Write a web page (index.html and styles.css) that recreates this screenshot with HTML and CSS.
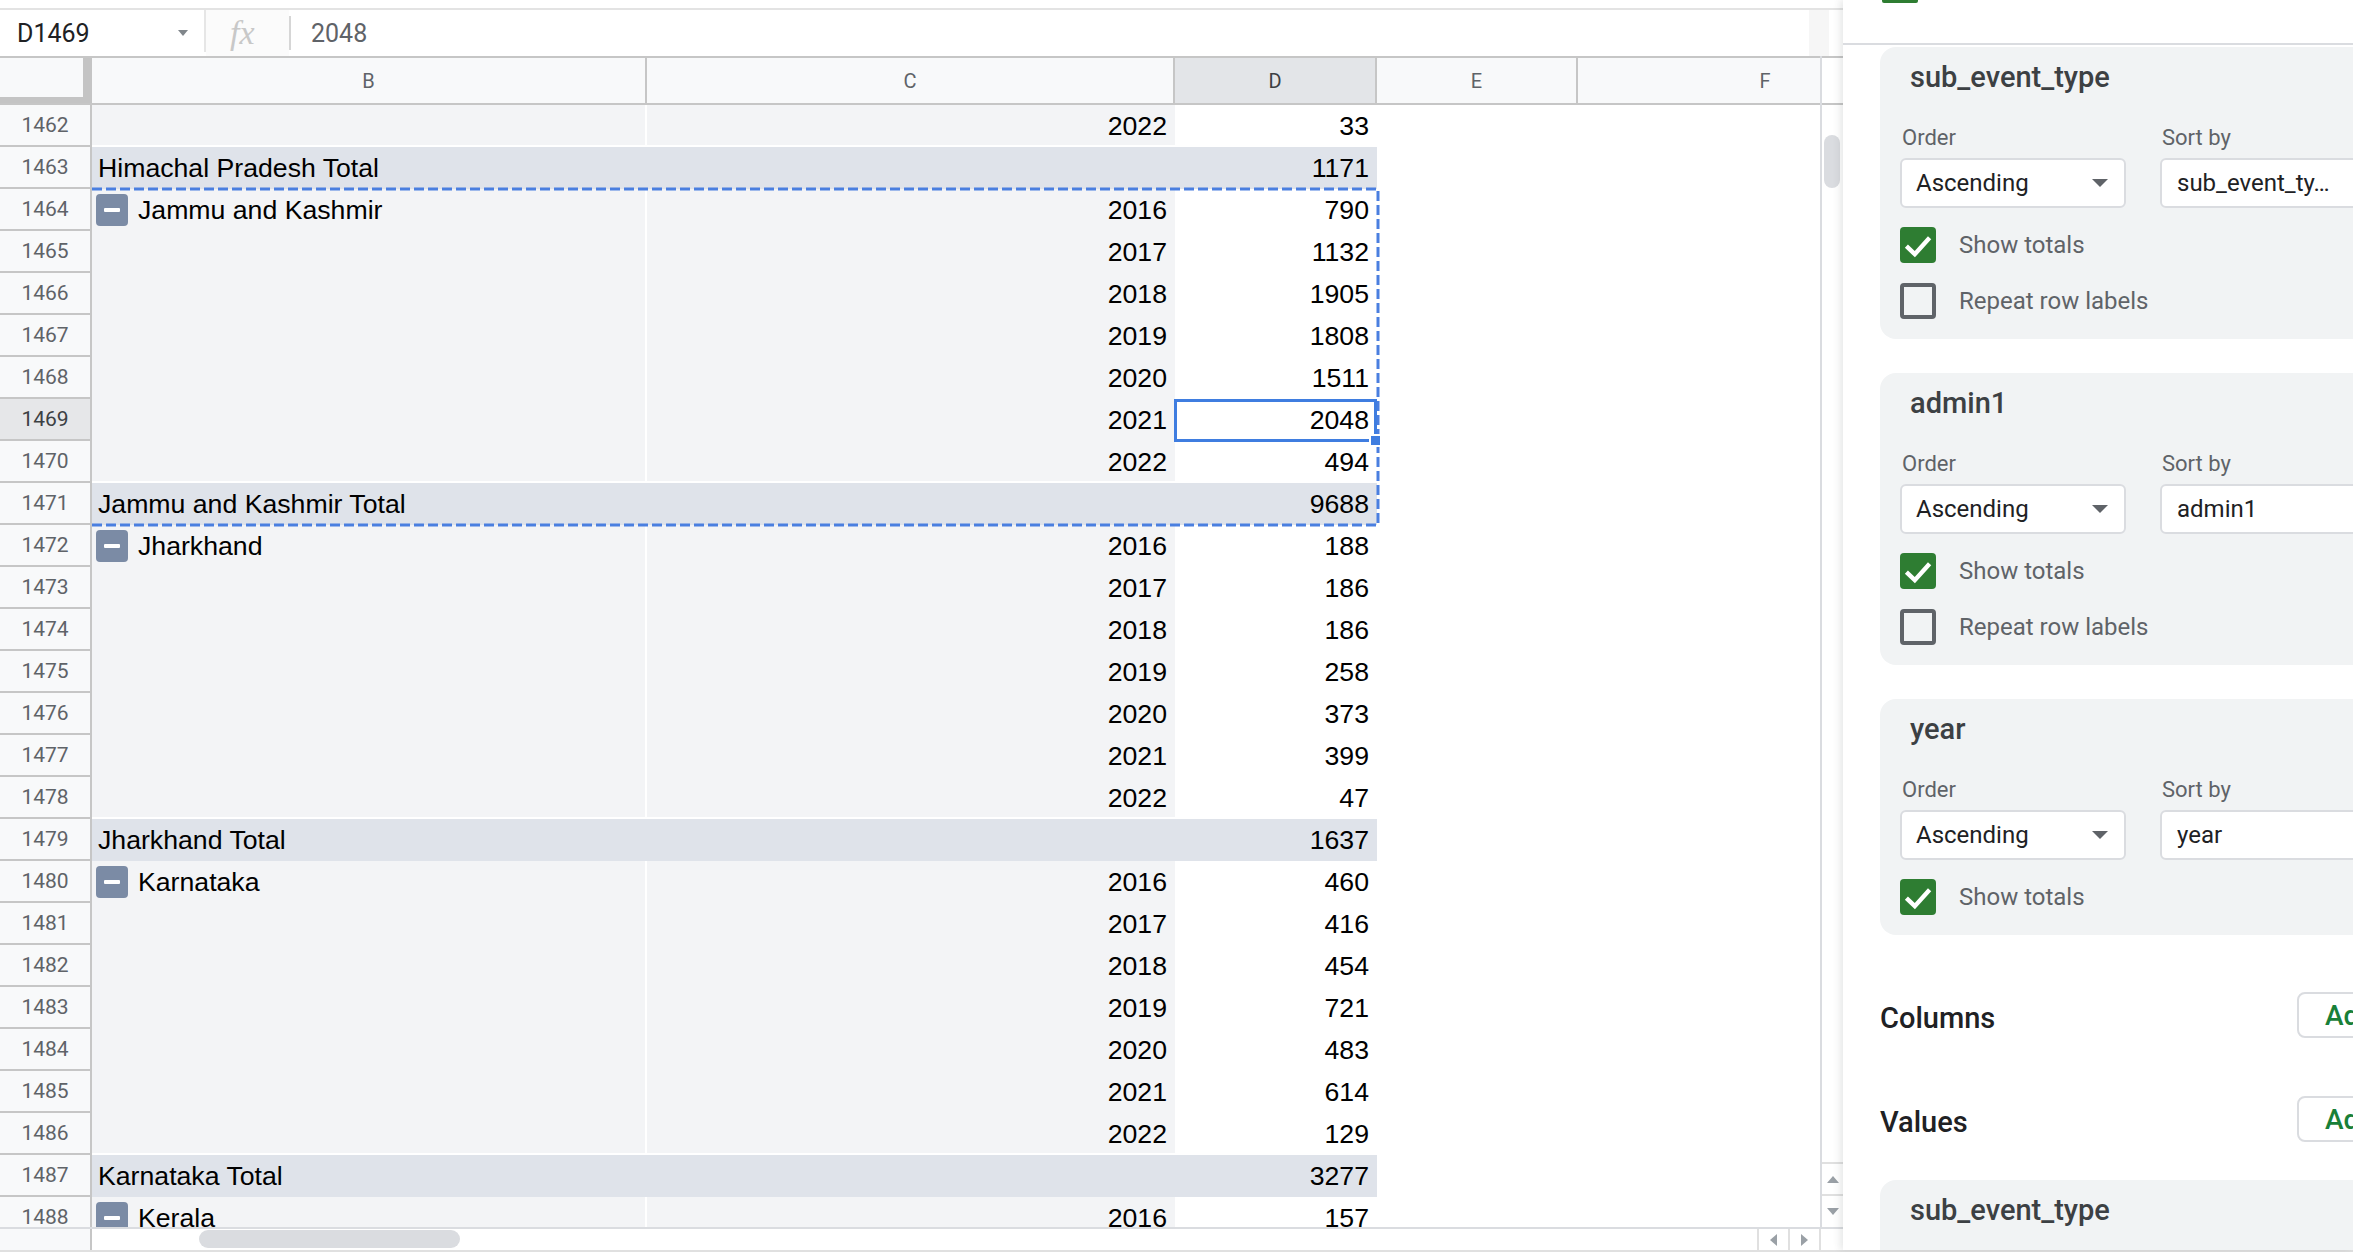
FILE: index.html
```html
<!DOCTYPE html>
<html>
<head>
<meta charset="utf-8">
<link rel="stylesheet" href="styles.css">
</head>
<body>
<div class="app">
  <div class="sheet">
    <div class="topstrip"></div>
    <div class="fbar">
      <div class="namebox"><span class="ref">D1469</span><svg class="nb-arrow" width="10" height="6" viewBox="0 0 10 6"><path d="M0 0 H10 L5 6 Z" fill="#80868b"/></svg></div>
      <div class="sep1"></div>
      <div class="fx">fx</div>
      <div class="sep2"></div>
      <div class="fval">2048</div>
      <div class="fbar-end"></div>
    </div>
    <div class="gridwrap">
      <div class="grid">
        <div class="hrow">
          <div class="corner"></div>
          <div class="ch">B</div>
          <div class="ch">C</div>
          <div class="ch sel">D</div>
          <div class="ch">E</div>
          <div class="ch">F</div>
        </div>

        <div class="row data last"><div class="rh">1462</div><div class="cell b"></div><div class="cell c num">2022</div><div class="cell d num">33</div><div class="cell e"></div><div class="cell f"></div></div>
        <div class="row total"><div class="rh">1463</div><div class="cell b">Himachal Pradesh Total</div><div class="cell c"></div><div class="cell d num">1171</div><div class="cell e"></div><div class="cell f"></div></div>

        <div class="row data grp"><div class="rh">1464</div><div class="cell b"><span class="tog"></span>Jammu and Kashmir</div><div class="cell c num">2016</div><div class="cell d num">790</div><div class="cell e"></div><div class="cell f"></div></div>
        <div class="row data"><div class="rh">1465</div><div class="cell b"></div><div class="cell c num">2017</div><div class="cell d num">1132</div><div class="cell e"></div><div class="cell f"></div></div>
        <div class="row data"><div class="rh">1466</div><div class="cell b"></div><div class="cell c num">2018</div><div class="cell d num">1905</div><div class="cell e"></div><div class="cell f"></div></div>
        <div class="row data"><div class="rh">1467</div><div class="cell b"></div><div class="cell c num">2019</div><div class="cell d num">1808</div><div class="cell e"></div><div class="cell f"></div></div>
        <div class="row data"><div class="rh">1468</div><div class="cell b"></div><div class="cell c num">2020</div><div class="cell d num">1511</div><div class="cell e"></div><div class="cell f"></div></div>
        <div class="row data"><div class="rh sel">1469</div><div class="cell b"></div><div class="cell c num">2021</div><div class="cell d num">2048</div><div class="cell e"></div><div class="cell f"></div></div>
        <div class="row data last"><div class="rh">1470</div><div class="cell b"></div><div class="cell c num">2022</div><div class="cell d num">494</div><div class="cell e"></div><div class="cell f"></div></div>
        <div class="row total"><div class="rh">1471</div><div class="cell b">Jammu and Kashmir Total</div><div class="cell c"></div><div class="cell d num">9688</div><div class="cell e"></div><div class="cell f"></div></div>

        <div class="row data grp"><div class="rh">1472</div><div class="cell b"><span class="tog"></span>Jharkhand</div><div class="cell c num">2016</div><div class="cell d num">188</div><div class="cell e"></div><div class="cell f"></div></div>
        <div class="row data"><div class="rh">1473</div><div class="cell b"></div><div class="cell c num">2017</div><div class="cell d num">186</div><div class="cell e"></div><div class="cell f"></div></div>
        <div class="row data"><div class="rh">1474</div><div class="cell b"></div><div class="cell c num">2018</div><div class="cell d num">186</div><div class="cell e"></div><div class="cell f"></div></div>
        <div class="row data"><div class="rh">1475</div><div class="cell b"></div><div class="cell c num">2019</div><div class="cell d num">258</div><div class="cell e"></div><div class="cell f"></div></div>
        <div class="row data"><div class="rh">1476</div><div class="cell b"></div><div class="cell c num">2020</div><div class="cell d num">373</div><div class="cell e"></div><div class="cell f"></div></div>
        <div class="row data"><div class="rh">1477</div><div class="cell b"></div><div class="cell c num">2021</div><div class="cell d num">399</div><div class="cell e"></div><div class="cell f"></div></div>
        <div class="row data last"><div class="rh">1478</div><div class="cell b"></div><div class="cell c num">2022</div><div class="cell d num">47</div><div class="cell e"></div><div class="cell f"></div></div>
        <div class="row total"><div class="rh">1479</div><div class="cell b">Jharkhand Total</div><div class="cell c"></div><div class="cell d num">1637</div><div class="cell e"></div><div class="cell f"></div></div>

        <div class="row data grp"><div class="rh">1480</div><div class="cell b"><span class="tog"></span>Karnataka</div><div class="cell c num">2016</div><div class="cell d num">460</div><div class="cell e"></div><div class="cell f"></div></div>
        <div class="row data"><div class="rh">1481</div><div class="cell b"></div><div class="cell c num">2017</div><div class="cell d num">416</div><div class="cell e"></div><div class="cell f"></div></div>
        <div class="row data"><div class="rh">1482</div><div class="cell b"></div><div class="cell c num">2018</div><div class="cell d num">454</div><div class="cell e"></div><div class="cell f"></div></div>
        <div class="row data"><div class="rh">1483</div><div class="cell b"></div><div class="cell c num">2019</div><div class="cell d num">721</div><div class="cell e"></div><div class="cell f"></div></div>
        <div class="row data"><div class="rh">1484</div><div class="cell b"></div><div class="cell c num">2020</div><div class="cell d num">483</div><div class="cell e"></div><div class="cell f"></div></div>
        <div class="row data"><div class="rh">1485</div><div class="cell b"></div><div class="cell c num">2021</div><div class="cell d num">614</div><div class="cell e"></div><div class="cell f"></div></div>
        <div class="row data last"><div class="rh">1486</div><div class="cell b"></div><div class="cell c num">2022</div><div class="cell d num">129</div><div class="cell e"></div><div class="cell f"></div></div>
        <div class="row total"><div class="rh">1487</div><div class="cell b">Karnataka Total</div><div class="cell c"></div><div class="cell d num">3277</div><div class="cell e"></div><div class="cell f"></div></div>

        <div class="row data grp"><div class="rh">1488</div><div class="cell b"><span class="tog"></span>Kerala</div><div class="cell c num">2016</div><div class="cell d num">157</div><div class="cell e"></div><div class="cell f"></div></div>

        <svg class="marquee" width="1820" height="1171" viewBox="0 0 1820 1171"><path d="M92 133 H1378 V469 H92" fill="none" stroke="#4a7fe0" stroke-width="3" stroke-dasharray="10 4"/></svg>
        <div class="active"></div>
        <div class="handle"></div>
      </div>
      <div class="vscroll">
        <div class="vs-head"></div>
        <div class="vs-track"><div class="vs-thumb"></div></div>
        <div class="vs-btn"><svg width="12" height="7" viewBox="0 0 12 7"><path d="M0 7 L6 0 L12 7 Z" fill="#9aa0a6"/></svg></div>
        <div class="vs-btn vs-btn2"><svg width="12" height="7" viewBox="0 0 12 7"><path d="M0 0 L6 7 L12 0 Z" fill="#9aa0a6"/></svg></div>
      </div>
    </div>
    <div class="hscroll">
      <div class="hs-left"></div>
      <div class="hs-track"><div class="hs-thumb"></div></div>
      <div class="hs-btn"><svg width="7" height="12" viewBox="0 0 7 12"><path d="M7 0 L0 6 L7 12 Z" fill="#9aa0a6"/></svg></div>
      <div class="hs-btn"><svg width="7" height="12" viewBox="0 0 7 12"><path d="M0 0 L7 6 L0 12 Z" fill="#9aa0a6"/></svg></div>
      <div class="hs-corner"></div>
    </div>
  </div>

  <div class="panel">
    <div class="ptop"><div class="stub"></div></div>
    <div class="pbody">
      <div class="card">
        <div class="ctitle">sub_event_type</div>
        <div class="labels"><span>Order</span><span>Sort by</span></div>
        <div class="selects">
          <div class="selbox">Ascending<svg class="tri" width="16" height="8" viewBox="0 0 16 8"><path d="M0 0 H16 L8 8 Z" fill="#5f6368"/></svg></div>
          <div class="selbox">sub_event_ty…</div>
        </div>
        <div class="cbrow"><span class="cb on"><svg width="36" height="36" viewBox="0 0 18 18"><path d="M3.2 9.6 L7.4 13.6 L14.8 5.4" fill="none" stroke="#fff" stroke-width="2.2"/></svg></span>Show totals</div>
        <div class="cbrow"><span class="cb off"></span>Repeat row labels</div>
      </div>

      <div class="card">
        <div class="ctitle">admin1</div>
        <div class="labels"><span>Order</span><span>Sort by</span></div>
        <div class="selects">
          <div class="selbox">Ascending<svg class="tri" width="16" height="8" viewBox="0 0 16 8"><path d="M0 0 H16 L8 8 Z" fill="#5f6368"/></svg></div>
          <div class="selbox">admin1</div>
        </div>
        <div class="cbrow"><span class="cb on"><svg width="36" height="36" viewBox="0 0 18 18"><path d="M3.2 9.6 L7.4 13.6 L14.8 5.4" fill="none" stroke="#fff" stroke-width="2.2"/></svg></span>Show totals</div>
        <div class="cbrow"><span class="cb off"></span>Repeat row labels</div>
      </div>

      <div class="card">
        <div class="ctitle">year</div>
        <div class="labels"><span>Order</span><span>Sort by</span></div>
        <div class="selects">
          <div class="selbox">Ascending<svg class="tri" width="16" height="8" viewBox="0 0 16 8"><path d="M0 0 H16 L8 8 Z" fill="#5f6368"/></svg></div>
          <div class="selbox">year</div>
        </div>
        <div class="cbrow"><span class="cb on"><svg width="36" height="36" viewBox="0 0 18 18"><path d="M3.2 9.6 L7.4 13.6 L14.8 5.4" fill="none" stroke="#fff" stroke-width="2.2"/></svg></span>Show totals</div>
      </div>

      <div class="sect sect1"><span class="sect-label">Columns</span><span class="addbtn">Add</span></div>
      <div class="sect sect2"><span class="sect-label">Values</span><span class="addbtn">Add</span></div>

      <div class="card card4">
        <div class="ctitle">sub_event_type</div>
      </div>
    </div>
  </div>
</div>
<div class="bottomline"></div>
</body>
</html>
```

FILE: styles.css
```css
* { box-sizing: border-box; margin: 0; padding: 0; }
html, body { width: 2353px; height: 1252px; overflow: hidden; background: #fff; }
body { font-family: Roboto, "Liberation Sans", Arial, sans-serif; }

.app { display: flex; height: 1250px; }
.sheet { width: 1843px; flex: none; display: flex; flex-direction: column; }

.topstrip { height: 10px; border-bottom: 2px solid #e3e3e3; }

.fbar { height: 46px; display: flex; align-items: center; }
.namebox { width: 204px; height: 100%; display: flex; align-items: center; padding-left: 17px; padding-right: 16px; }
.ref { font-size: 25px; color: #202124; }
.nb-arrow { margin-left: auto; }
.sep1 { width: 2px; height: 42px; align-self: flex-start; background: #e6e6e6; }
.fx { width: 83px; height: 100%; display: flex; align-items: center; padding-left: 24px; font-family: "Liberation Serif", serif; font-style: italic; font-size: 34px; color: #c8c8c8; background: #fbfbfb; }
.sep2 { width: 2px; height: 34px; background: #d6d6d6; }
.fval { padding-left: 20px; font-size: 25px; color: #5f6368; }
.fbar-end { margin-left: auto; margin-right: 14px; width: 20px; height: 100%; background: #f6f6f6; }

.gridwrap { height: 1171px; display: flex; }
.grid { width: 1820px; height: 1171px; position: relative; overflow: hidden; flex: none; }

.hrow, .row { display: grid; grid-template-columns: 92px 555px 528px 202px 201px 376px; }
.hrow { height: 49px; border-top: 2px solid #c6c6c6; border-bottom: 2px solid #c6c6c6; background: #f8f9fa; }
.corner { border-right: 9px solid #c4c4c4; border-bottom: 6px solid #c4c4c4; }
.ch { border-right: 2px solid #c6c6c6; display: flex; align-items: center; justify-content: center; font-size: 20px; color: #5f6368; }
.ch.sel { background: #e3e5e8; color: #3c4043; }

.row { height: 42px; }
.rh { background: #f8f9fa; border-right: 2px solid #c6c6c6; border-bottom: 2px solid #c6c6c6; display: flex; align-items: center; justify-content: center; font-size: 21px; color: #5f6368; }
.rh.sel { background: #e6e7e9; color: #3c4043; }

.cell { display: flex; align-items: center; overflow: hidden; white-space: nowrap; font-family: "Liberation Sans", Arial, sans-serif; font-size: 26.67px; color: #000; }
.b { padding-left: 6px; }
.num { justify-content: flex-end; padding-right: 8px; }

.data .b, .data .c { background: #f3f4f6; }
.data .b { box-shadow: inset -2px 0 0 #fff; }
.data.last .b { box-shadow: inset -2px -2px 0 #fff; }
.data.last .c { box-shadow: inset 0 -2px 0 #fff; }
.total .b, .total .c, .total .d { background: #dfe3ea; }

.grp .b { padding-left: 4px; }
.tog { width: 32px; height: 32px; border-radius: 4px; background: #7b8ba5; display: flex; align-items: center; justify-content: center; margin-right: 10px; flex: none; }
.tog::after { content: ""; width: 16px; height: 4px; border-radius: 1px; background: #fff; }

.marquee { position: absolute; left: 0; top: 0; pointer-events: none; }
.active { position: absolute; left: 1174px; top: 343px; width: 203px; height: 43px; border: 3px solid #3f7de0; }
.handle { position: absolute; left: 1369px; top: 378px; width: 13px; height: 13px; background: #3f7de0; border: 2px solid #fff; }

.vscroll { width: 23px; flex: none; border-left: 2px solid #dadce0; display: flex; flex-direction: column; }
.vs-head { height: 49px; border-top: 2px solid #c6c6c6; border-bottom: 2px solid #c6c6c6; }
.vs-track { flex: 1; }
.vs-thumb { margin: 30px 0 0 2px; width: 16px; height: 53px; border-radius: 8px; background: #dadce0; }
.vs-btn { height: 32px; border-top: 2px solid #e0e0e0; display: flex; align-items: center; justify-content: center; }
.vs-btn2 { height: 33px; }

.hscroll { height: 23px; border-top: 2px solid #dadce0; display: flex; }
.hs-left { width: 92px; flex: none; background: #f8f9fa; border-right: 2px solid #c6c6c6; }
.hs-track { flex: 1; padding-top: 1px; }
.hs-thumb { margin-left: 107px; width: 261px; height: 18px; border-radius: 9px; background: #dadce0; }
.hs-btn { width: 31px; flex: none; border-left: 2px solid #e0e0e0; display: flex; align-items: center; justify-content: center; }
.hs-corner { width: 24px; flex: none; border-left: 2px solid #e0e0e0; }

.panel { width: 510px; height: 1250px; flex: none; overflow: hidden; background: #fff; box-shadow: -3px 0 7px rgba(60, 64, 67, 0.12); position: relative; }
.ptop { height: 45px; border-bottom: 2px solid #dadce0; padding-left: 39px; }
.stub { width: 36px; height: 3px; background: #2e7d32; border-radius: 0 0 2px 2px; }
.pbody { padding: 2px 0 0 37px; }

.card { width: 580px; background: #f1f3f4; border-radius: 16px; padding: 12px 0 20px 20px; margin-bottom: 34px; }
.ctitle { font-size: 29px; font-weight: 500; line-height: 36px; color: #3c4043; padding-left: 10px; }
.labels { display: grid; grid-template-columns: 226px 226px; column-gap: 34px; margin-top: 30px; font-size: 22px; line-height: 26px; color: #5f6368; }
.labels span { padding-left: 2px; }
.selects { display: grid; grid-template-columns: 226px 226px; column-gap: 34px; margin-top: 7px; }
.selbox { height: 50px; background: #fff; border: 2px solid #dadce0; border-radius: 6px; display: flex; align-items: center; padding-left: 14px; font-size: 24px; color: #202124; white-space: nowrap; }
.selbox + .selbox { padding-left: 15px; }
.tri { margin-left: auto; margin-right: 16px; }
.cbrow { display: flex; align-items: center; height: 36px; margin-top: 19px; font-size: 24px; color: #5f6368; }
.cbrow + .cbrow { margin-top: 20px; }
.cb { width: 36px; height: 36px; border-radius: 4px; margin-right: 23px; flex: none; display: block; }
.cb.on { background: #2e7d32; }
.cb.on svg { display: block; }
.cb.off { border: 4px solid #5f6368; }

.sect { width: 537px; height: 46px; display: flex; align-items: center; justify-content: space-between; }
.sect1 { margin-top: 57px; }
.sect2 { margin-top: 58px; }
.sect-label { font-size: 29px; font-weight: 500; color: #202124; margin-top: 6px; }
.addbtn { width: 120px; height: 46px; border: 2px solid #dadce0; border-radius: 8px; padding-left: 26px; display: flex; align-items: center; font-size: 28px; font-weight: 500; color: #188038; }
.card4 { margin-top: 38px; height: 200px; }

.bottomline { height: 2px; background: #e0e0e0; }
```
